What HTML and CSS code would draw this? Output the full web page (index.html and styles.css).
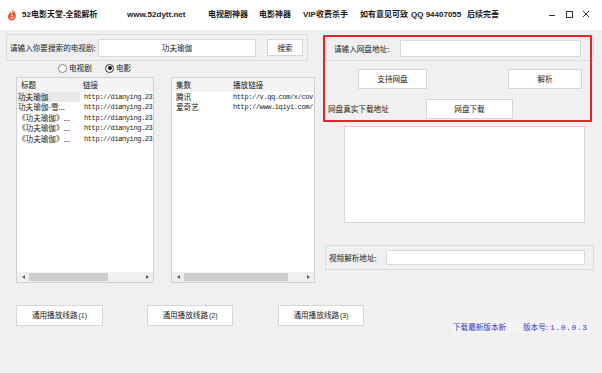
FILE: index.html
```html
<!DOCTYPE html>
<html lang="zh-CN">
<head>
  <meta charset="UTF-8">
  <title>52电影天堂-全能解析</title>
  <link rel="stylesheet" href="styles.css">
</head>
<body>
  <div class="window">
    <div class="titlebar">
      <svg class="app-icon" width="10" height="12" viewBox="0 0 10 12">
        <path d="M5 0.5 C6.5 2 8.5 3.2 8.8 6 C9.1 9.2 7 11.5 4.6 11.5 C2.2 11.5 0.8 9.6 1 7.4 C1.2 5.2 3 4.6 3.4 2.6 C4.4 3.4 4.6 4.4 4.4 5.4 C5.6 4.4 5.8 2.4 5 0.5 Z" fill="#e8562a"/>
        <path d="M3 8.2 C3.6 9.6 6.2 9.8 6.8 7.8" fill="none" stroke="#fff" stroke-width="1"/>
        <circle cx="5.2" cy="6.6" r="0.9" fill="#fff"/>
      </svg>
      <span class="t-item t-name">52电影天堂-全能解析</span>
      <span class="t-item t-site">www.52dytt.net</span>
      <span class="t-item t-tv">电视剧神器</span>
      <span class="t-item t-movie">电影神器</span>
      <span class="t-item t-vip">VIP收费杀手</span>
      <span class="t-item t-note">如有意见可致</span>
      <span class="t-item t-qq">QQ 94407055</span>
      <span class="t-item t-more">后续完善</span>
      <div class="controls">
        <svg width="17" height="12" viewBox="0 0 17 12"><path d="M5 6.5 H11" stroke="#333" stroke-width="1"/></svg>
        <svg width="17" height="12" viewBox="0 0 17 12"><rect x="5.5" y="2.5" width="6" height="6" fill="none" stroke="#333" stroke-width="1"/></svg>
        <svg width="17" height="12" viewBox="0 0 17 12"><path d="M5 2 L11 8 M11 2 L5 8" stroke="#333" stroke-width="1"/></svg>
      </div>
    </div>

    <div class="main">
      <div class="left">
        <div class="group search">
          <span class="label search-label">请输入你要搜索的电视剧:</span>
          <div class="field search-field">功夫瑜伽</div>
          <button class="btn btn-search">搜索</button>
        </div>

        <div class="radios">
          <span class="radio radio-tv"><span class="dot"></span>电视剧</span>
          <span class="radio radio-movie checked"><span class="dot"></span>电影</span>
        </div>

        <div class="lists">
          <div class="list list-a">
            <div class="row head"><span class="c1">标题</span><span class="c2">链接</span></div>
            <div class="row sel"><span class="c1">功夫瑜伽</span><span class="c2 mono">http://dianying.23</span></div>
            <div class="row"><span class="c1">功夫瑜伽-雪...</span><span class="c2 mono">http://dianying.23</span></div>
            <div class="row"><span class="c1">《功夫瑜伽》...</span><span class="c2 mono">http://dianying.23</span></div>
            <div class="row"><span class="c1">《功夫瑜伽》...</span><span class="c2 mono">http://dianying.23</span></div>
            <div class="row"><span class="c1">《功夫瑜伽》...</span><span class="c2 mono">http://dianying.23</span></div>
            <div class="fill"></div>
            <div class="hscroll">
              <span class="arrow"><span class="tri-left"></span></span>
              <span class="thumb thumb-a"></span>
              <span class="fill"></span>
              <span class="arrow"><span class="tri-right"></span></span>
            </div>
          </div>

          <div class="list list-b">
            <div class="row head"><span class="c1">集数</span><span class="c2">播放链接</span></div>
            <div class="row"><span class="c1">腾讯</span><span class="c2 mono">http://v.qq.com/x/cov</span></div>
            <div class="row"><span class="c1">爱奇艺</span><span class="c2 mono">http://www.iqiyi.com/</span></div>
            <div class="fill"></div>
            <div class="hscroll">
              <span class="arrow"><span class="tri-left"></span></span>
              <span class="thumb thumb-b"></span>
              <span class="fill"></span>
              <span class="arrow"><span class="tri-right"></span></span>
            </div>
          </div>
        </div>
      </div>

      <div class="right">
        <div class="group pan">
          <span class="label pan-label">请输入网盘地址:</span>
          <div class="field pan-field"></div>
        </div>

        <div class="pan-buttons">
          <button class="btn btn-support">支持网盘</button>
          <button class="btn btn-parse">解析</button>
        </div>

        <div class="pan-download">
          <span class="label real-label">网盘真实下载地址</span>
          <button class="btn btn-download">网盘下载</button>
        </div>

        <div class="memo"></div>

        <div class="group video">
          <span class="label video-label">视频解析地址:</span>
          <div class="field video-field"></div>
        </div>

        <div class="highlight"></div>
      </div>
    </div>

    <div class="footer">
      <button class="btn btn-line btn-line1">通用播放线路<span class="num">(1)</span></button>
      <button class="btn btn-line btn-line2">通用播放线路<span class="num">(2)</span></button>
      <button class="btn btn-line btn-line3">通用播放线路<span class="num">(3)</span></button>
      <span class="blue link-new">下载最新版本新</span>
      <span class="blue version">版本号:<span class="ver-num">1.0.0.3</span></span>
    </div>
  </div>
</body>
</html>
```

FILE: styles.css
```css
* { box-sizing: border-box; }
body {
  margin: 0;
  background: #f0f0f0;
  font-family: "Noto Sans CJK SC", "Liberation Sans", sans-serif;
  font-size: 7.6px;
  color: #1a1a1a;
}
.window {
  width: 602px;
  height: 373px;
  background: #f0f0f0;
  display: flex;
  flex-direction: column;
  overflow: hidden;
}

/* title bar */
.titlebar {
  height: 30px;
  flex: none;
  background: #fff;
  display: flex;
  align-items: center;
  font-family: "Liberation Sans", "Noto Sans CJK SC", sans-serif;
  font-size: 8px;
  font-weight: bold;
  line-height: 12px;
  white-space: nowrap;
}
.app-icon { margin-left: 7px; flex: none; }
.t-item { flex: none; }
.t-name { margin-left: 5px; width: 105px; }
.t-site { width: 81px; }
.t-tv { width: 51px; }
.t-movie { width: 44px; }
.t-vip { width: 57px; }
.t-note { width: 51px; }
.t-qq { width: 56px; }
.t-more { width: 77px; }
.controls { display: flex; flex: none; }
.controls svg { display: block; }

.main { display: flex; flex: none; }
.left { width: 318px; flex: none; }
.right { position: relative; flex: 1; }

/* group boxes, fields, buttons */
.group {
  border: 1px solid #dcdcdc;
  display: flex;
  align-items: center;
}
.label { white-space: nowrap; line-height: 12px; flex: none; }
.field {
  background: #fff;
  border: 1px solid #dadada;
  flex: none;
  line-height: 15px;
}
.btn {
  font-family: "Noto Sans CJK SC", "Liberation Sans", sans-serif;
  font-size: 7.6px;
  color: #1a1a1a;
  background: #fff;
  border: 1px solid #d6d6d6;
  padding: 0;
  line-height: 12px;
  flex: none;
}

.search { margin: 4px 0 0 6px; width: 302px; height: 27px; }
.search-label { padding-left: 3px; width: 91px; }
.search-field { width: 158px; height: 18px; text-align: center; }
.btn-search { margin-left: 11px; width: 36px; height: 17px; }

.radios { margin-top: 1px; height: 12px; display: flex; align-items: center; }
.radio { display: flex; align-items: center; line-height: 12px; white-space: nowrap; }
.radio .dot {
  width: 9px;
  height: 9px;
  border: 1px solid #8a8a8a;
  border-radius: 50%;
  background: #fff;
  margin-right: 2px;
  display: flex;
  align-items: center;
  justify-content: center;
}
.radio.checked .dot { border-color: #333; }
.radio.checked .dot::after {
  content: "";
  width: 4px;
  height: 4px;
  border-radius: 50%;
  background: #111;
}
.radio-tv { margin-left: 58px; width: 47px; }

/* list views */
.lists { margin: 3px 0 0 16px; display: flex; gap: 17px; }
.list {
  height: 206px;
  background: #fff;
  border: 1px solid #d0d0d0;
  display: flex;
  flex-direction: column;
  overflow: hidden;
}
.list-a { width: 138px; }
.list-b { width: 144px; }
.row {
  display: flex;
  height: 10.4px;
  line-height: 10.4px;
  white-space: nowrap;
  flex: none;
}
.row.head { height: 14px; line-height: 14px; background: #f4f4f4; }
.c1 { flex: none; overflow: hidden; }
.c2 { flex: none; }
.list-a .c1 { width: 63px; padding-left: 1px; }
.list-a .head .c1 { padding-left: 4px; }
.list-a .c2 { padding-left: 4px; }
.list-a .head .c2 { padding-left: 3px; }
.list-a .sel .c1 { background: #e9e9e9; }
.list-b .c1 { width: 61px; padding-left: 4px; }
.mono {
  font-family: "Liberation Mono", monospace;
  font-size: 7px;
  letter-spacing: -0.4px;
}
.fill { flex: 1; }
.hscroll {
  height: 10px;
  flex: none;
  background: #f0f0f0;
  display: flex;
  align-items: center;
}
.arrow {
  width: 12px;
  height: 10px;
  display: flex;
  align-items: center;
  justify-content: center;
  flex: none;
}
.tri-left, .tri-right { width: 0; height: 0; border-top: 2.5px solid transparent; border-bottom: 2.5px solid transparent; }
.tri-left { border-right: 3px solid #606060; }
.tri-right { border-left: 3px solid #606060; }
.thumb { height: 8px; background: #cdcdcd; flex: none; }
.thumb-a { width: 79px; }
.thumb-b { width: 104px; }

/* right column */
.pan { margin: 6px 0 0 7px; width: 269px; height: 25px; }
.pan-label { padding-left: 8px; width: 74px; }
.pan-field { width: 181px; height: 17px; }
.pan-buttons { margin-top: 8px; display: flex; }
.btn-support { margin-left: 40px; width: 69px; height: 20px; }
.btn-parse { margin-left: 81px; width: 74px; height: 20px; }
.pan-download { margin-top: 10px; display: flex; align-items: center; }
.real-label { margin-left: 10px; width: 98px; }
.btn-download { width: 87px; height: 20px; }
.memo {
  margin: 7px 0 0 26px;
  width: 241px;
  height: 97px;
  background: #fff;
  border: 1px solid #d6d6d6;
}
.video { margin: 22px 0 0 7px; width: 269px; height: 25px; }
.video-label { padding-left: 3px; width: 60px; }
.video-field { width: 199px; height: 15px; }
.highlight {
  position: absolute;
  left: 5px;
  top: 5px;
  width: 269px;
  height: 87px;
  border: 2px solid #e3262d;
}

/* footer */
.footer { margin-top: 22px; display: flex; align-items: flex-start; }
.btn-line { height: 21px; }
.btn-line1 { margin-left: 16px; width: 87px; }
.btn-line2 { margin-left: 44px; width: 86px; }
.btn-line3 { margin-left: 45px; width: 86px; }
.num { font-family: "Liberation Sans", sans-serif; font-size: 7px; margin-left: 1px; }
.blue {
  color: #3636cc;
  line-height: 12px;
  margin-top: 16px;
  white-space: nowrap;
  flex: none;
  background: #f4f4f7;
}
.link-new { margin-left: 89px; width: 70px; }
.ver-num {
  font-family: "Liberation Mono", monospace;
  font-size: 8px;
  letter-spacing: 0.6px;
  margin-left: 2px;
}
```
